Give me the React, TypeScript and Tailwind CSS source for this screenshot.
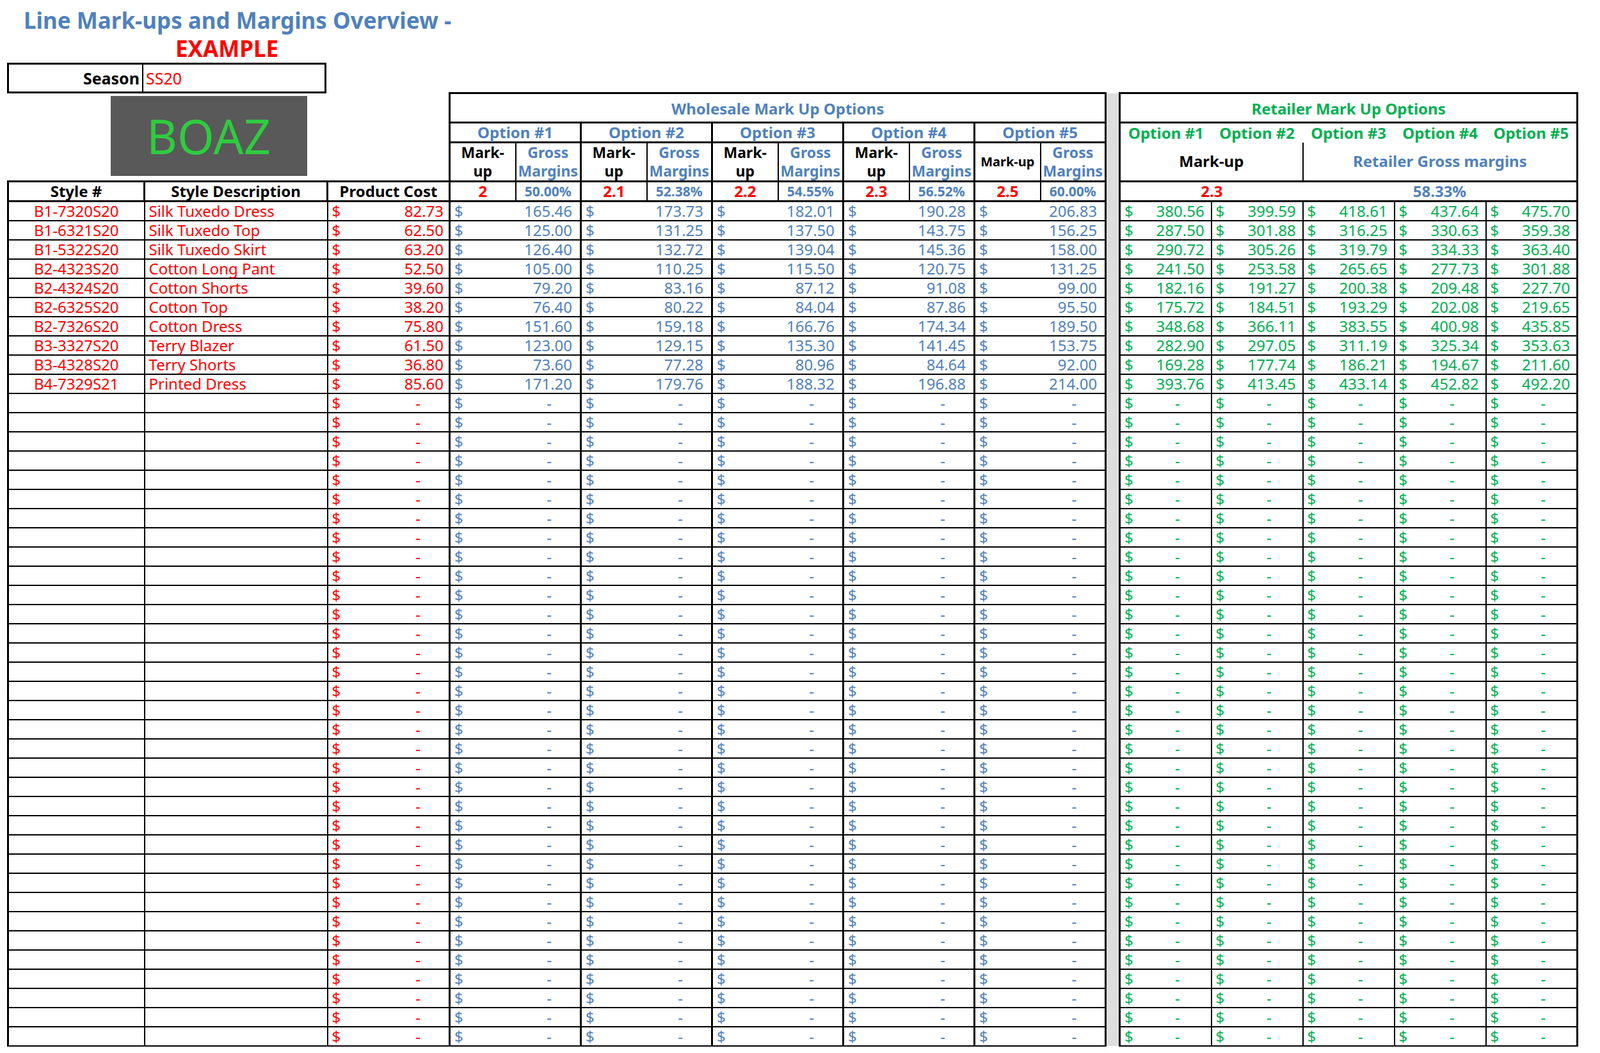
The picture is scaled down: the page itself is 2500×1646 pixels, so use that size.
import React from "react";

const NARROW = "font-['Liberation_Sans_Narrow','Arial_Narrow','Liberation_Sans',sans-serif]";

const items: [string, string, number][] = [
  ["B1-7320S20", "Silk Tuxedo Dress", 82.73],
  ["B1-6321S20", "Silk Tuxedo Top", 62.5],
  ["B1-5322S20", "Silk Tuxedo Skirt", 63.2],
  ["B2-4323S20", "Cotton Long Pant", 52.5],
  ["B2-4324S20", "Cotton Shorts", 39.6],
  ["B2-6325S20", "Cotton Top", 38.2],
  ["B2-7326S20", "Cotton Dress", 75.8],
  ["B3-3327S20", "Terry Blazer", 61.5],
  ["B3-4328S20", "Terry Shorts", 36.8],
  ["B4-7329S21", "Printed Dress", 85.6],
];
const markups = [2, 2.1, 2.2, 2.3, 2.5];
const margins = ["50.00%", "52.38%", "54.55%", "56.52%", "60.00%"];
const fmt = (n: number) => (Math.round(n * 100 + 1e-7) / 100).toFixed(2);

const BLUE = "text-[#4f81bd]";
const RED = "text-[#ff0000]";
const GREEN = "text-[#00b050]";

function Money({ v, color, dashPad = "pr-[44px]", numPad = "pr-[8px]" }: { v: number | null; color: string; dashPad?: string; numPad?: string }) {
  return (
    <div className={`flex justify-between items-center h-[28px] pl-[6px] ${v === null ? dashPad : numPad} ${color}`}>
      <span>$</span>
      <span>{v === null ? "-" : fmt(v)}</span>
    </div>
  );
}

const colW = [213, 286, 191, 103, 102, 103, 102, 103, 102, 103, 102, 103, 102, 22, 143, 143, 143, 143, 143];

export default function App() {
  const rows = Array.from({ length: 44 }, (_, i) => items[i] ?? null);
  const td = "border-2 border-black p-0";
  return (
    <div className="bg-white w-[2500px] h-[1646px] overflow-hidden pl-[11px] pt-[10px] font-['Liberation_Sans',Arial,sans-serif]">
      <div className={`h-[44px] leading-[44px] text-[35px] font-bold pl-[26px] ${BLUE} ${NARROW}`}>
        Line Mark-ups and Margins Overview -
      </div>
      <div className={`h-[44px] leading-[44px] text-[35px] font-bold pl-[263px] ${RED} ${NARROW}`}>
        EXAMPLE
      </div>
      <div className={`flex w-[499px] h-[48px] border-[3px] border-black text-[25px] ${NARROW}`}>
        <div className="w-[210px] border-r-2 border-black flex items-end justify-end pr-[4px] pb-[2px] font-bold">Season</div>
        <div className={`flex items-end pl-[4px] pb-[2px] ${RED}`}>SS20</div>
      </div>
      <table className="table-fixed border-collapse -mt-[2px] w-[2455px]">
        <colgroup>
          {colW.map((w, i) => (
            <col key={i} style={{ width: w }} />
          ))}
        </colgroup>
        <tbody>
          <tr className="h-[46px]">
            <td colSpan={3} rowSpan={3} className="p-0 align-top">
              <div className="ml-[160px] mt-[4px] w-[307px] h-[125px] bg-[#595959] flex items-center justify-center text-[74px] text-[#2ecc40]">
                BOAZ
              </div>
            </td>
            <td colSpan={10} className={`border-[3px] border-black text-center align-bottom pb-[2px] text-[24px] font-bold ${BLUE} ${NARROW}`}>
              Wholesale Mark Up Options
            </td>
            <td rowSpan={48} className="bg-[#dedede] p-0"></td>
            <td colSpan={5} className={`border-[3px] border-black text-center align-bottom pb-[2px] text-[24px] font-bold ${GREEN} ${NARROW}`}>
              Retailer Mark Up Options
            </td>
          </tr>
          <tr className="h-[31px]">
            {[1, 2, 3, 4, 5].map((n) => (
              <td key={n} colSpan={2} className={`border-[3px] border-black text-center text-[24px] font-bold leading-none ${BLUE} ${NARROW}`}>
                Option #{n}
              </td>
            ))}
            {[1, 2, 3, 4, 5].map((n) => (
              <td
                key={"r" + n}
                className={`p-0 text-center text-[24px] font-bold leading-none ${GREEN} ${NARROW} border-t-[3px] border-black ${n === 1 ? "border-l-[3px]" : ""} ${n === 5 ? "border-r-[3px]" : ""}`}
              >
                Option #{n}
              </td>
            ))}
          </tr>
          <tr className="h-[60px]">
            {[1, 2, 3, 4, 5].map((n) => (
              <React.Fragment key={n}>
                {n < 5 ? (
                  <td className={`border-2 border-l-[3px] border-black text-center text-[23px] font-bold leading-[29px] p-0 ${NARROW}`}>
                    Mark-
                    <br />
                    up
                  </td>
                ) : (
                  <td className={`border-2 border-l-[3px] border-black text-center text-[20px] font-bold p-0 ${NARROW}`}>
                    Mark-up
                  </td>
                )}
                <td className={`border-2 border-r-[3px] border-black text-center text-[23px] font-bold leading-[29px] p-0 ${BLUE} ${NARROW}`}>
                  Gross
                  <br />
                  Margins
                </td>
              </React.Fragment>
            ))}
            <td colSpan={2} className={`border-l-[3px] border-r-2 border-black text-center text-[24px] font-bold p-0 ${NARROW}`}>
              Mark-up
            </td>
            <td colSpan={3} className={`border-r-[3px] border-black text-center text-[24px] font-bold p-0 ${BLUE} ${NARROW}`}>
              Retailer Gross margins
            </td>
          </tr>
          <tr className="h-[31px]">
            {["Style #", "Style Description", "Product Cost"].map((h) => (
              <td key={h} className={`border-[3px] border-black text-center text-[24px] font-bold p-0 leading-none ${NARROW}`}>
                {h}
              </td>
            ))}
            {markups.map((m, i) => (
              <React.Fragment key={i}>
                <td className={`border-[3px] border-r-2 border-black text-center text-[24px] font-bold p-0 leading-none ${RED} ${NARROW}`}>
                  {m}
                </td>
                <td className={`border-[3px] border-l-2 border-black text-center text-[21px] font-bold p-0 leading-none ${BLUE} ${NARROW}`}>
                  {margins[i]}
                </td>
              </React.Fragment>
            ))}
            <td colSpan={2} className={`border-[3px] border-r-0 border-black text-center text-[24px] font-bold p-0 leading-none ${RED} ${NARROW}`}>
              2.3
            </td>
            <td colSpan={3} className={`border-[3px] border-l-0 border-black text-center text-[24px] font-bold p-0 leading-none ${BLUE} ${NARROW}`}>
              58.33%
            </td>
          </tr>
          {rows.map((r, i) => {
            const cost = r ? r[2] : null;
            return (
              <tr key={i} className="h-[30px] text-[24px] leading-none">
                <td className={`${td} border-l-[3px] text-center ${RED}`}>{r ? r[0] : ""}</td>
                <td className={`${td} pl-[6px] ${RED}`}>{r ? r[1] : ""}</td>
                <td className={`${td} border-r-[3px]`}>
                  <Money v={cost} color={RED} />
                </td>
                {markups.map((m, j) => (
                  <td key={j} colSpan={2} className={`${td} border-l-[3px] border-r-[3px]`}>
                    <Money v={cost === null ? null : cost * m} color={BLUE} numPad="pr-[12px]" />
                  </td>
                ))}
                {markups.map((m, j) => (
                  <td key={"r" + j} className={`${td} ${j === 0 ? "border-l-[3px]" : ""} ${j === 4 ? "border-r-[3px]" : ""}`}>
                    <Money v={cost === null ? null : cost * m * 2.3} color={GREEN} dashPad="pr-[48px]" numPad="pr-[10px]" />
                  </td>
                ))}
              </tr>
            );
          })}
        </tbody>
      </table>
    </div>
  );
}
